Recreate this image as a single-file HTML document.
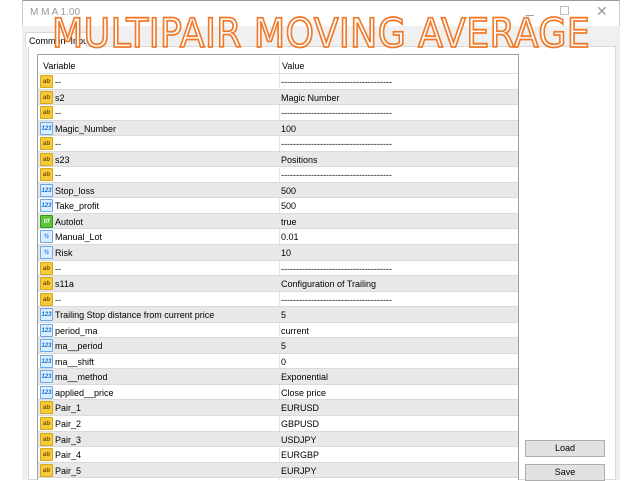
<!DOCTYPE html>
<html><head><style>
*{margin:0;padding:0;box-sizing:border-box}
body{width:640px;height:480px;background:#fff;position:relative;overflow:hidden;font-family:"Liberation Sans",sans-serif;font-size:9px;color:#000}
.win{position:absolute;left:22px;top:0;width:598px;height:480px;background:#fff;border-left:1px solid #ccc;border-right:1px solid #ccc;border-top:1px solid #999}
.grey{position:absolute;left:22px;top:26px;width:598px;height:454px;background:#f0f0f0}
.panel{position:absolute;left:28px;top:46px;width:588px;height:434px;background:#fff;border:1px solid #d9d9d9}
.tab{position:absolute;left:25px;top:32px;width:62px;height:15px;background:#fff;border:1px solid #d9d9d9;border-bottom:none;font-size:9px;padding:3px 0 0 3px;color:#000;white-space:nowrap;overflow:hidden}
.ttl{position:absolute;left:30px;top:7px;font-size:10px;color:#999}
.ctl{position:absolute;top:4px;color:#999;font-size:14px}
.tbl{position:absolute;left:37px;top:54px;width:482px;height:426px;border:1px solid #a0a0a0;border-bottom:none;background:#fff;overflow:hidden}
.hdr{height:19px;border-bottom:1px solid #e0e0e0;position:relative}
.hdr span{position:absolute;top:6px}
.row{height:15.56px;position:relative;border-bottom:1px solid #dadada}
.row.g{background:#e8e8e8}
.row .n{position:absolute;left:17px;top:3px}
.row .v{position:absolute;left:243px;top:3px}
.div{position:absolute;left:241px;top:0;width:1px;height:100%;background:#e4e4e4}
.ic{position:absolute;left:2px;top:1px;width:13px;height:13px;font-size:6px;line-height:13px;text-align:center;font-weight:bold;border-radius:1px}
.ab{background:#f3cc3a;color:#7a4d00;border:1px solid #d9a520}
.nm{background:#dbeeff;color:#1a6fd0;border:1px solid #6aa9e8}
.bl{background:#5fc43a;color:#fff;border:1px solid #2f9a1a}
.btn{position:absolute;left:525px;width:80px;height:17px;background:#e1e1e1;border:1px solid #adadad;text-align:center;font-size:9px;line-height:15px}
.big{position:absolute;left:52px;top:11px;font-size:40px;letter-spacing:0.5px;color:#fff;-webkit-text-stroke:1.8px #f07a2a;font-family:"DejaVu Sans","Liberation Sans",sans-serif;white-space:nowrap;transform:scaleX(0.905);transform-origin:left top}
</style></head><body>
<div class="win"></div>
<div class="grey"></div>
<div class="ttl">M M A 1.00</div>
<div class="ctl" style="left:526px;top:0">_</div>
<div class="ctl" style="left:560px;top:6px;width:9px;height:9px;border:1px solid #bbb"></div>
<div class="ctl" style="left:596px;top:3px">✕</div>
<div class="panel"></div>
<div class="tab">Common &nbsp;Inputs</div>
<div class="tbl">
<div class="div"></div>
<div class="hdr"><span style="left:5px">Variable</span><span style="left:244px">Value</span></div>
<div class="row"><i class="ic ab">ab</i><span class="n">--</span><span class="v">-------------------------------------</span></div>
<div class="row g"><i class="ic ab">ab</i><span class="n">s2</span><span class="v">Magic Number</span></div>
<div class="row"><i class="ic ab">ab</i><span class="n">--</span><span class="v">-------------------------------------</span></div>
<div class="row g"><i class="ic nm">123</i><span class="n">Magic_Number</span><span class="v">100</span></div>
<div class="row"><i class="ic ab">ab</i><span class="n">--</span><span class="v">-------------------------------------</span></div>
<div class="row g"><i class="ic ab">ab</i><span class="n">s23</span><span class="v">Positions</span></div>
<div class="row"><i class="ic ab">ab</i><span class="n">--</span><span class="v">-------------------------------------</span></div>
<div class="row g"><i class="ic nm">123</i><span class="n">Stop_loss</span><span class="v">500</span></div>
<div class="row"><i class="ic nm">123</i><span class="n">Take_profit</span><span class="v">500</span></div>
<div class="row g"><i class="ic bl">t/f</i><span class="n">Autolot</span><span class="v">true</span></div>
<div class="row"><i class="ic nm">½</i><span class="n">Manual_Lot</span><span class="v">0.01</span></div>
<div class="row g"><i class="ic nm">½</i><span class="n">Risk</span><span class="v">10</span></div>
<div class="row"><i class="ic ab">ab</i><span class="n">--</span><span class="v">-------------------------------------</span></div>
<div class="row g"><i class="ic ab">ab</i><span class="n">s11a</span><span class="v">Configuration of Trailing</span></div>
<div class="row"><i class="ic ab">ab</i><span class="n">--</span><span class="v">-------------------------------------</span></div>
<div class="row g"><i class="ic nm">123</i><span class="n">Trailing Stop distance from current price</span><span class="v">5</span></div>
<div class="row"><i class="ic nm">123</i><span class="n">period_ma</span><span class="v">current</span></div>
<div class="row g"><i class="ic nm">123</i><span class="n">ma__period</span><span class="v">5</span></div>
<div class="row"><i class="ic nm">123</i><span class="n">ma__shift</span><span class="v">0</span></div>
<div class="row g"><i class="ic nm">123</i><span class="n">ma__method</span><span class="v">Exponential</span></div>
<div class="row"><i class="ic nm">123</i><span class="n">applied__price</span><span class="v">Close price</span></div>
<div class="row g"><i class="ic ab">ab</i><span class="n">Pair_1</span><span class="v">EURUSD</span></div>
<div class="row"><i class="ic ab">ab</i><span class="n">Pair_2</span><span class="v">GBPUSD</span></div>
<div class="row g"><i class="ic ab">ab</i><span class="n">Pair_3</span><span class="v">USDJPY</span></div>
<div class="row"><i class="ic ab">ab</i><span class="n">Pair_4</span><span class="v">EURGBP</span></div>
<div class="row g"><i class="ic ab">ab</i><span class="n">Pair_5</span><span class="v">EURJPY</span></div>
</div>
<div class="btn" style="top:440px">Load</div>
<div class="btn" style="top:464px">Save</div>
<div class="big">MULTIPAIR MOVING AVERAGE</div>
</body></html>
